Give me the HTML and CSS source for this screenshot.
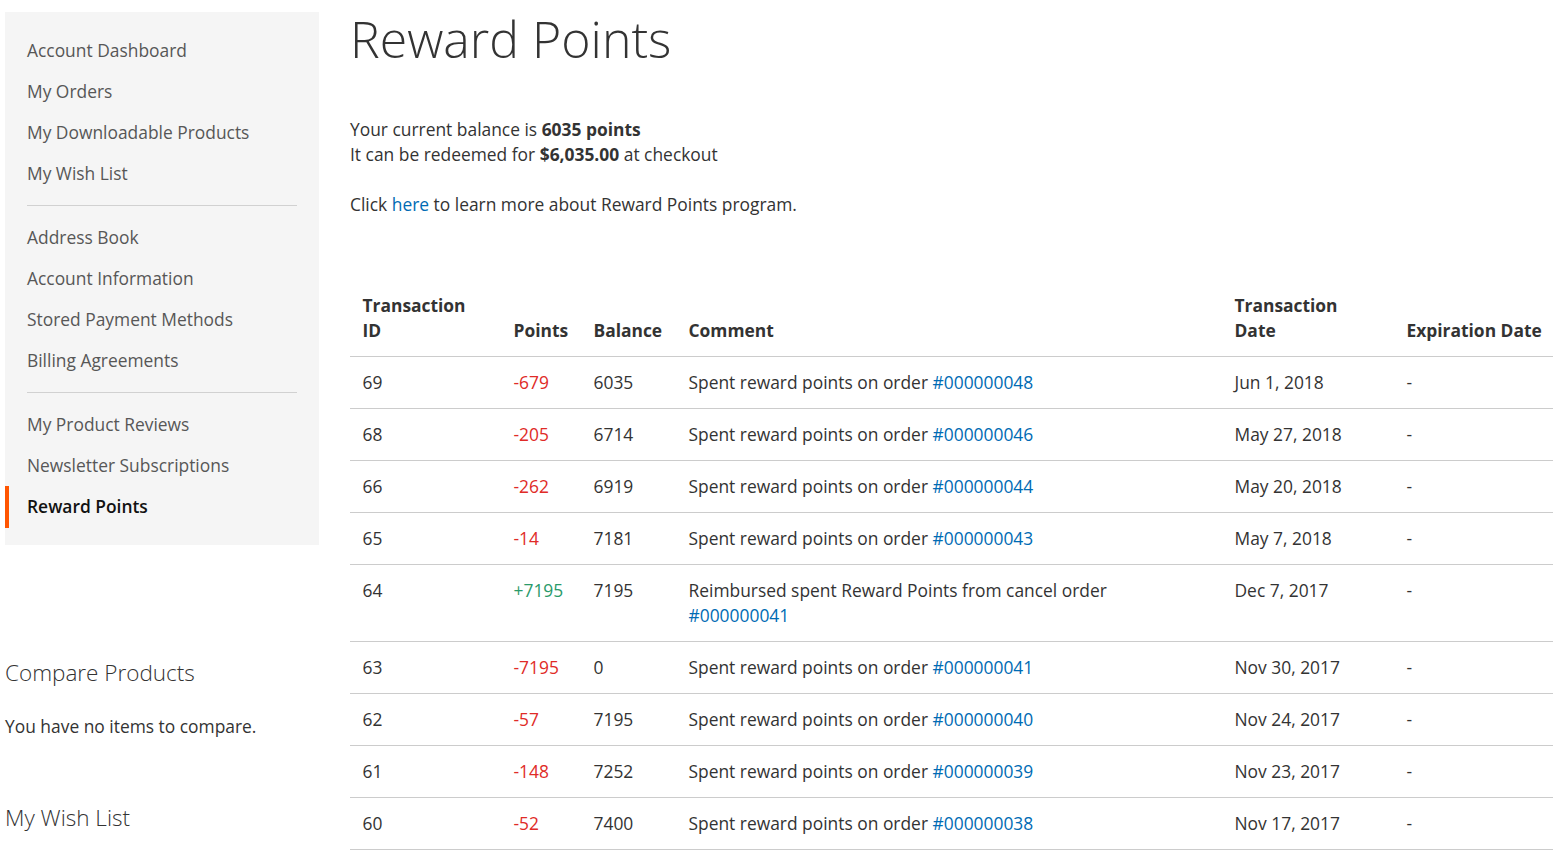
FILE: index.html
```html
<!DOCTYPE html>
<html lang="en">
<head>
<meta charset="utf-8">
<title>Reward Points</title>
<link rel="stylesheet" href="styles.css">
</head>
<body>
<div class="page">
  <aside class="sidebar">
    <nav class="account-nav">
      <ul class="nav-list">
        <li class="nav-item"><a href="#">Account Dashboard</a></li>
        <li class="nav-item"><a href="#">My Orders</a></li>
        <li class="nav-item"><a href="#">My Downloadable Products</a></li>
        <li class="nav-item"><a href="#">My Wish List</a></li>
        <li class="nav-sep"></li>
        <li class="nav-item"><a href="#">Address Book</a></li>
        <li class="nav-item"><a href="#">Account Information</a></li>
        <li class="nav-item"><a href="#">Stored Payment Methods</a></li>
        <li class="nav-item"><a href="#">Billing Agreements</a></li>
        <li class="nav-sep"></li>
        <li class="nav-item"><a href="#">My Product Reviews</a></li>
        <li class="nav-item"><a href="#">Newsletter Subscriptions</a></li>
        <li class="nav-item current"><strong>Reward Points</strong></li>
      </ul>
    </nav>
    <div class="block compare">
      <div class="block-title">Compare Products</div>
      <div class="block-content">You have no items to compare.</div>
    </div>
    <div class="block wishlist">
      <div class="block-title">My Wish List</div>
    </div>
  </aside>
  <main class="main">
    <h1 class="page-title">Reward Points</h1>
    <div class="balance">
      <p>Your current balance is <strong>6035 points</strong><br>It can be redeemed for <strong>$6,035.00</strong> at checkout</p>
      <p>Click <a href="#">here</a> to learn more about Reward Points program.</p>
    </div>
    <table class="tx-table">
      <colgroup>
        <col class="c-id"><col class="c-pts"><col class="c-bal"><col class="c-com"><col class="c-date"><col class="c-exp">
      </colgroup>
      <thead>
        <tr><th>Transaction<br>ID</th><th>Points</th><th>Balance</th><th>Comment</th><th>Transaction<br>Date</th><th class="nowrap">Expiration Date</th></tr>
      </thead>
      <tbody>
        <tr><td>69</td><td class="neg">-679</td><td>6035</td><td>Spent reward points on order <a href="#">#000000048</a></td><td>Jun 1, 2018</td><td>-</td></tr>
        <tr><td>68</td><td class="neg">-205</td><td>6714</td><td>Spent reward points on order <a href="#">#000000046</a></td><td>May 27, 2018</td><td>-</td></tr>
        <tr><td>66</td><td class="neg">-262</td><td>6919</td><td>Spent reward points on order <a href="#">#000000044</a></td><td>May 20, 2018</td><td>-</td></tr>
        <tr><td>65</td><td class="neg">-14</td><td>7181</td><td>Spent reward points on order <a href="#">#000000043</a></td><td>May 7, 2018</td><td>-</td></tr>
        <tr><td>64</td><td class="pos">+7195</td><td>7195</td><td>Reimbursed spent Reward Points from cancel order <a href="#">#000000041</a></td><td>Dec 7, 2017</td><td>-</td></tr>
        <tr><td>63</td><td class="neg">-7195</td><td>0</td><td>Spent reward points on order <a href="#">#000000041</a></td><td>Nov 30, 2017</td><td>-</td></tr>
        <tr><td>62</td><td class="neg">-57</td><td>7195</td><td>Spent reward points on order <a href="#">#000000040</a></td><td>Nov 24, 2017</td><td>-</td></tr>
        <tr><td>61</td><td class="neg">-148</td><td>7252</td><td>Spent reward points on order <a href="#">#000000039</a></td><td>Nov 23, 2017</td><td>-</td></tr>
        <tr><td>60</td><td class="neg">-52</td><td>7400</td><td>Spent reward points on order <a href="#">#000000038</a></td><td>Nov 17, 2017</td><td>-</td></tr>
      </tbody>
    </table>
  </main>
</div>
</body>
</html>
```

FILE: styles.css
```css
* { box-sizing: border-box; }
html, body { margin: 0; padding: 0; background: #fff; }
body {
  font-family: "Open Sans", "Liberation Sans", sans-serif;
  font-size: 17.4px;
  line-height: 25px;
  color: #333;
}
a { color: #006bb4; text-decoration: none; }
.page {
  display: flex;
  align-items: flex-start;
  padding: 12px 6px 0 5px;
  gap: 31px;
}
.sidebar { width: 314px; flex: 0 0 314px; }
.account-nav {
  background: #f5f5f5;
  padding: 17.5px 0 17.4px 0;
}
.nav-list { list-style: none; margin: 0; padding: 0; }
.nav-item {
  height: 41.1px;
  display: flex;
  align-items: center;
  padding-left: 22px;
  border-left: 4px solid transparent;
}
.nav-item a, .nav-item strong { color: #575757; margin-left: -4px; }
.nav-item.current { border-left-color: #ff5501; }
.nav-item.current strong { color: #111; font-weight: 600; }
.nav-sep {
  height: 1px;
  background: #d1d1d1;
  margin: 11px 22px 11px 22px;
}
.block-title {
  font-size: 22.5px;
  font-weight: 300;
  line-height: 28px;
  color: #333;
}
.compare { margin-top: 114px; }
.compare .block-content { margin-top: 27px; }
.wishlist { margin-top: 65px; }
.main { flex: 1; min-width: 0; }
.page-title {
  margin: 0;
  font-size: 50px;
  font-weight: 300;
  line-height: 55px;
  color: #333;
}
.balance { margin-top: 49.5px; }
.balance p { margin: 0 0 25px 0; }
.balance p:last-child { margin-bottom: 0; }
.balance strong { font-weight: 700; }
.tx-table {
  margin-top: 63.5px;
  width: 100%;
  border-collapse: collapse;
  table-layout: fixed;
}
.c-id { width: 151px; }
.c-pts { width: 80px; }
.c-bal { width: 95px; }
.c-com { width: 546px; }
.c-date { width: 172px; }
.c-exp { width: 159px; }
.tx-table th {
  text-align: left;
  vertical-align: bottom;
  font-weight: 700;
  padding: 13px 12.5px 13px 12.5px;
  border-bottom: 1px solid #ccc;
}
.tx-table th.nowrap { white-space: nowrap; }
.tx-table td {
  vertical-align: top;
  padding: 13px 12.5px 13px 12.5px;
  border-bottom: 1px solid #ccc;
}
.tx-table .neg { color: #e02b27; }
.tx-table .pos { color: #2a9a6a; }
```
